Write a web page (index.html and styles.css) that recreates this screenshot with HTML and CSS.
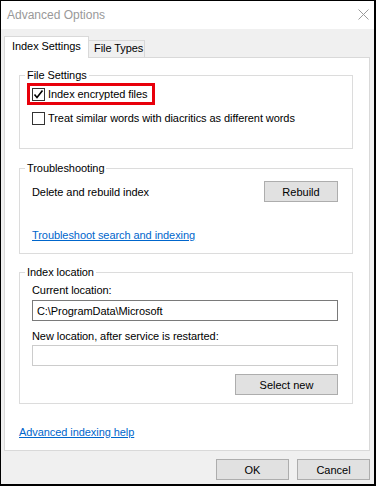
FILE: index.html
```html
<!DOCTYPE html>
<html lang="en">
<head>
    <meta charset="UTF-8">
    <meta name="viewport" content="width=device-width, initial-scale=1.0">
    <title>Advanced Options</title>
    <link rel="stylesheet" href="styles.css">
</head>
<body>
    <div class="window">
        <div class="titlebar">
            <span class="title">Advanced Options</span>
            <svg class="close" width="11" height="11" viewBox="0 0 11 11">
                <path d="M0.5 0.5 L10.5 10.5 M10.5 0.5 L0.5 10.5" stroke="#9a9a9a" stroke-width="1" fill="none"/>
            </svg>
        </div>
        <div class="main">
            <div class="tabs">
                <div class="tab tab-active">Index Settings</div>
                <div class="tab">File Types</div>
            </div>
            <div class="panel">
                <div class="group group-files">
                    <div class="legend">File Settings</div>
                    <label class="check highlight">
                        <span class="box">
                            <svg width="11" height="11" viewBox="0 0 11 11">
                                <path d="M1.5 5.5 L4 8.5 L9.5 1.5" stroke="#000" stroke-width="1.6" fill="none"/>
                            </svg>
                        </span>
                        Index encrypted files
                    </label>
                    <label class="check second">
                        <span class="box"></span>
                        Treat similar words with diacritics as different words
                    </label>
                </div>

                <div class="group group-trouble">
                    <div class="legend">Troubleshooting</div>
                    <div class="row">
                        <span>Delete and rebuild index</span>
                        <button class="btn btn-rebuild">Rebuild</button>
                    </div>
                    <a class="link trouble-link" href="#">Troubleshoot search and indexing</a>
                </div>

                <div class="group group-location">
                    <div class="legend">Index location</div>
                    <div class="field-label first">Current location:</div>
                    <div class="input input-current">C:\ProgramData\Microsoft</div>
                    <div class="field-label">New location, after service is restarted:</div>
                    <div class="input input-new"></div>
                    <div class="row-end">
                        <button class="btn btn-select">Select new</button>
                    </div>
                </div>

                <a class="link help-link" href="#">Advanced indexing help</a>
            </div>
            <div class="footer">
                <button class="btn btn-dialog">OK</button>
                <button class="btn btn-dialog">Cancel</button>
            </div>
        </div>
    </div>
</body>
</html>
```

FILE: styles.css
```css
* {
    font-family: "Liberation Sans", Arial, sans-serif;
}

body {
    margin: 0;
    font-size: 11px;
    line-height: 14px;
    letter-spacing: -0.07px;
    color: #000;
}

.window {
    width: 376px;
    height: 486px;
    box-sizing: border-box;
    border: 1px solid #000;
    border-right-width: 2px;
    border-bottom-width: 2px;
    background-color: #f0f0f0;
    display: flex;
    flex-direction: column;
}

.titlebar {
    height: 28px;
    background-color: #fff;
    display: flex;
    align-items: center;
    justify-content: space-between;
    padding: 0 5px 0 6px;
}

.title {
    font-size: 12px;
    letter-spacing: 0;
    color: #999;
}

.close {
    display: block;
    margin-top: -1px;
}

.main {
    flex: 1;
    padding: 7px 0 0 3px;
    display: flex;
    flex-direction: column;
}

.tabs {
    display: flex;
    align-items: flex-end;
    height: 21px;
}

.tab {
    box-sizing: border-box;
    height: 17px;
    width: 56px;
    border: 1px solid #d9d9d9;
    border-left: none;
    border-bottom: none;
    padding-left: 5px;
    background-color: #f0f0f0;
}

.tab-active {
    position: relative;
    z-index: 1;
    height: 22px;
    width: 85px;
    margin-bottom: -1px;
    border-left: 1px solid #d9d9d9;
    padding: 2px 0 0 7px;
    background-color: #fff;
}

.panel {
    box-sizing: border-box;
    width: 366px;
    height: 394px;
    border: 1px solid #d9d9d9;
    background-color: #fff;
    display: flex;
    flex-direction: column;
    align-items: flex-start;
}

.group {
    box-sizing: border-box;
    width: 334px;
    margin-left: 14px;
    border: 1px solid #dcdcdc;
    display: flex;
    flex-direction: column;
    align-items: flex-start;
}

.group-files {
    margin-top: 17px;
    height: 74px;
}

.group-trouble {
    margin-top: 19px;
    height: 86px;
}

.group-location {
    margin-top: 18px;
    height: 132px;
}

.legend {
    margin: -8px 0 0 5px;
    padding: 0 2px;
    background-color: #fff;
}

.check {
    display: flex;
    align-items: center;
    gap: 3px;
    white-space: nowrap;
}

.box {
    box-sizing: border-box;
    width: 13px;
    height: 13px;
    border: 1px solid #333;
    background-color: #fff;
    display: flex;
    align-items: center;
    justify-content: center;
}

.box svg {
    display: block;
}

.highlight {
    box-sizing: border-box;
    width: 128px;
    height: 22px;
    margin: 1px 0 0 7px;
    padding-left: 2px;
    border: 3px solid #e8000b;
}

.second {
    height: 16px;
    margin: 5px 0 0 12px;
}

.row {
    box-sizing: border-box;
    width: 100%;
    margin-top: 6px;
    padding: 0 14px 0 12px;
    display: flex;
    align-items: center;
    justify-content: space-between;
}

.btn {
    box-sizing: border-box;
    height: 21px;
    border: 1px solid #adadad;
    background-color: #e1e1e1;
    font-size: 11px;
    color: #000;
    padding: 0;
}

.btn-rebuild {
    width: 74px;
}

.link {
    color: #0066cc;
    text-decoration: underline;
}

.trouble-link {
    margin: 26px 0 0 12px;
}

.field-label {
    margin: 2px 0 0 12px;
}

.field-label.first {
    margin-top: 4px;
}

.input {
    box-sizing: border-box;
    width: 306px;
    height: 21px;
    margin: 3px 0 0 12px;
    padding-left: 4px;
    border: 1px solid #7a7a7a;
    display: flex;
    align-items: center;
}

.input-current {
    margin-bottom: 6px;
}

.input-new {
    margin-top: 2px;
    border-color: #cccccc;
}

.row-end {
    box-sizing: border-box;
    width: 100%;
    margin-top: 8px;
    padding-right: 14px;
    display: flex;
    justify-content: flex-end;
}

.btn-select {
    width: 103px;
}

.help-link {
    margin: 21px 0 0 14px;
}

.footer {
    width: 366px;
    margin-top: 8px;
    display: flex;
    justify-content: flex-end;
    gap: 8px;
}

.btn-dialog {
    width: 73px;
}
```
